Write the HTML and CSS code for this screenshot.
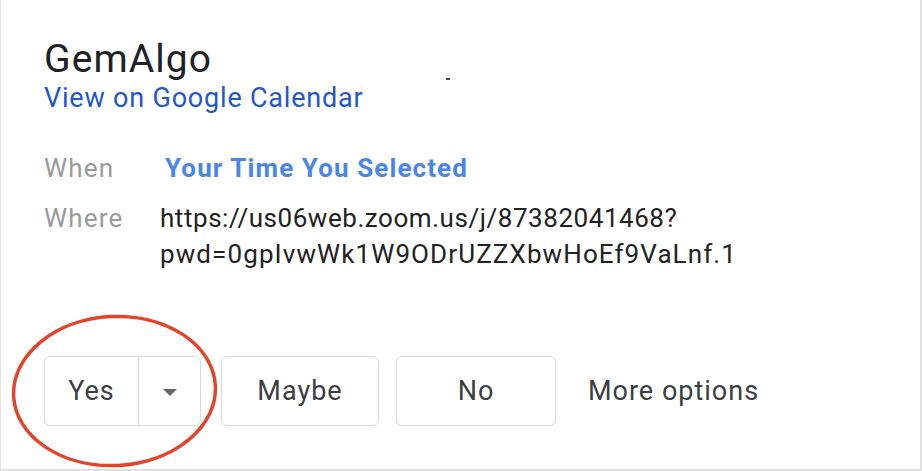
FILE: index.html
```html
<!DOCTYPE html>
<html>
<head>
<meta charset="utf-8">
<link rel="stylesheet" href="styles.css">
</head>
<body>
<div class="card">
  <span class="speck"></span>
  <h1 class="title">GemAlgo</h1>
  <a class="link" href="#">View on Google Calendar</a>
  <div class="details">
    <div class="label">When</div>
    <div class="value when">Your Time You Selected</div>
    <div class="label">Where</div>
    <div class="value where"><span class="url1">https://us06web.zoom.us/j/87382041468?</span><br><span class="url2">pwd=0gpIvwWk1W9ODrUZZXbwHoEf9VaLnf.1</span></div>
  </div>
  <div class="actions">
    <div class="split">
      <span class="split-main">Yes</span>
      <span class="split-arrow"><svg width="14" height="7" viewBox="0 0 14 7"><path d="M0 0H14L7 7Z" fill="#666"/></svg></span>
    </div>
    <span class="btn btn-maybe">Maybe</span>
    <span class="btn btn-no">No</span>
    <span class="more">More options</span>
    <svg class="circle" width="230" height="170" viewBox="0 0 230 170">
      <ellipse cx="113.5" cy="77" rx="101" ry="74.5" fill="none" stroke="#e5432a" stroke-width="3.5" transform="rotate(-3 113.5 77)"/>
    </svg>
  </div>
</div>
</body>
</html>
```

FILE: styles.css
```css
html, body {
  margin: 0;
  padding: 0;
  background: #ffffff;
}
body {
  font-family: Roboto, "Noto Sans", Arial, sans-serif;
}
.card {
  position: relative;
  box-sizing: border-box;
  width: 922px;
  height: 471px;
  border-left: 1px solid #e4e4e4;
  border-right: 2px solid #e0e0e0;
  border-bottom: 2px solid #e0e0e0;
  padding: 37px 0 0 43px;
  background: #ffffff;
}
.speck {
  position: absolute;
  left: 445px;
  top: 78px;
  width: 4px;
  height: 2px;
  background: #444;
}
.title {
  margin: 0;
  font-size: 39px;
  line-height: 45px;
  font-weight: 400;
  color: #202124;
  letter-spacing: 1.1px;
}
.link {
  display: block;
  font-size: 27px;
  line-height: 32px;
  color: #1f57d0;
  text-decoration: none;
  letter-spacing: 0.8px;
}
.details {
  display: grid;
  grid-template-columns: 116px auto;
  row-gap: 14px;
  margin-top: 36px;
  font-size: 26px;
  line-height: 36px;
}
.label {
  color: #9a9a9a;
  letter-spacing: 1.2px;
}
.value {
  color: #222222;
}
.url1 {
  letter-spacing: 0.55px;
}
.url2 {
  letter-spacing: 1.1px;
}
.when {
  padding-left: 5px;
  color: #4a86e8;
  font-weight: 700;
  font-size: 26px;
  letter-spacing: 1.1px;
}
.where {
  line-height: 36px;
}
.actions {
  position: relative;
  display: flex;
  align-items: center;
  margin-top: 84px;
  font-size: 27px;
  color: #3c4043;
  letter-spacing: 1px;
}
.split {
  display: flex;
  height: 70px;
  box-sizing: border-box;
  border: 1.5px solid #d9dbdf;
  border-radius: 6px;
}
.split-main {
  width: 93px;
  display: flex;
  align-items: center;
  justify-content: center;
  border-right: 1.5px solid #d9dbdf;
}
.split-arrow {
  width: 61px;
  display: flex;
  align-items: center;
  justify-content: center;
  padding-top: 2px;
}
.btn {
  display: flex;
  align-items: center;
  justify-content: center;
  height: 70px;
  box-sizing: border-box;
  border: 1.5px solid #d9dbdf;
  border-radius: 6px;
}
.btn-maybe {
  width: 158px;
  margin-left: 20px;
}
.btn-no {
  width: 160px;
  margin-left: 17px;
}
.more {
  margin-left: 32px;
}
.circle {
  position: absolute;
  left: -43px;
  top: -42px;
  pointer-events: none;
}
```
